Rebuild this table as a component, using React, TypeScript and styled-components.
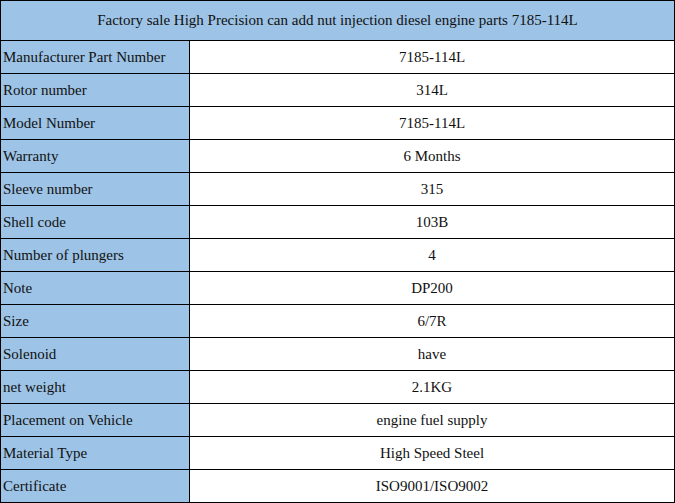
import React from "react";
import styled, { createGlobalStyle } from "styled-components";

const Global = createGlobalStyle`
  html, body { margin: 0; padding: 0; background: #fff; }
  body { font-family: "Liberation Serif", "Times New Roman", serif; }
`;

const Table = styled.div`
  width: 675px;
  box-sizing: border-box;
  display: grid;
  grid-template-columns: 189px 485px;
  grid-template-rows: 40px repeat(14, 33px);
  border-top: 1px solid #000;
  border-left: 1px solid #000;
  color: #111;
  font-size: 15px;
`;

const Header = styled.div`
  grid-column: 1 / 3;
  box-sizing: border-box;
  background: #9dc3e6;
  border-right: 1px solid #000;
  border-bottom: 1px solid #000;
  display: flex;
  align-items: center;
  justify-content: center;
  white-space: nowrap;
`;

const Cell = styled.div<{ $label?: boolean }>`
  box-sizing: border-box;
  border-right: 1px solid #000;
  border-bottom: 1px solid #000;
  background: ${(p) => (p.$label ? "#9dc3e6" : "#fff")};
  display: flex;
  align-items: center;
  justify-content: ${(p) => (p.$label ? "flex-start" : "center")};
  padding-left: ${(p) => (p.$label ? "2px" : "0")};
  white-space: nowrap;
`;

const rows: [string, string][] = [
  ["Manufacturer Part Number", "7185-114L"],
  ["Rotor number", "314L"],
  ["Model Number", "7185-114L"],
  ["Warranty", "6 Months"],
  ["Sleeve number", "315"],
  ["Shell code", "103B"],
  ["Number of plungers", "4"],
  ["Note", "DP200"],
  ["Size", "6/7R"],
  ["Solenoid", "have"],
  ["net weight", "2.1KG"],
  ["Placement on Vehicle", "engine fuel supply"],
  ["Material Type", "High Speed Steel"],
  ["Certificate", "ISO9001/ISO9002"],
];

export default function App() {
  return (
    <>
      <Global />
      <Table>
        <Header>
          Factory sale High Precision can add nut injection diesel engine parts 7185-114L
        </Header>
        {rows.map(([k, v]) => (
          <React.Fragment key={k}>
            <Cell $label>{k}</Cell>
            <Cell>{v}</Cell>
          </React.Fragment>
        ))}
      </Table>
    </>
  );
}
